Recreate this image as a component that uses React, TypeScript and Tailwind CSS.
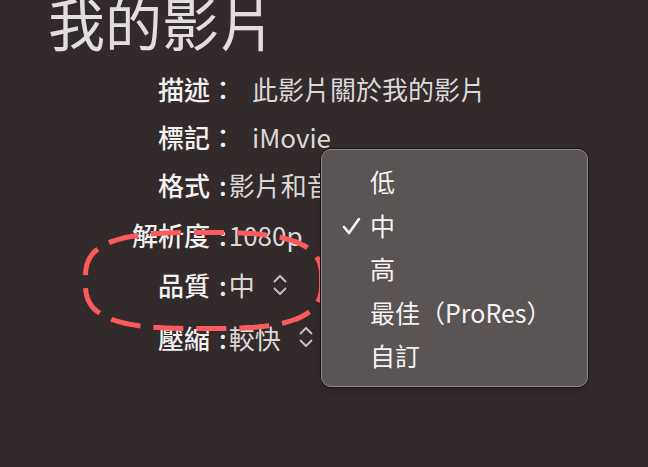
import React from 'react';

const font = { fontFamily: '"Noto Sans CJK TC", "Noto Sans", sans-serif' };

type Row = { label: string; value: string; wide?: boolean; stepper?: boolean; h: string };

const ROWS: Row[] = [
  { label: '描述', value: '此影片關於我的影片', wide: true, h: 'h-[48px]' },
  { label: '標記', value: 'iMovie', wide: true, h: 'h-[48px]' },
  { label: '格式', value: '影片和音訊', h: 'h-[49px]' },
  { label: '解析度', value: '1080p', h: 'h-[50px]' },
  { label: '品質', value: '中', stepper: true, h: 'h-[51px]' },
  { label: '壓縮', value: '較快', stepper: true, h: 'h-[54px]' },
];

const MENU_ITEMS = ['低', '中', '高', '最佳（ProRes）', '自訂'];

// superellipse outline for the hand-drawn style ring
const ringPath = (() => {
  const cx = 203.5, cy = 280.5, a = 118, b = 48, n = 3;
  const pts: string[] = [];
  for (let i = 0; i <= 240; i++) {
    const t = (i / 240) * Math.PI * 2;
    const c = Math.cos(t), s = Math.sin(t);
    const x = cx + a * Math.sign(c) * Math.pow(Math.abs(c), 2 / n);
    const y = cy + b * Math.sign(s) * Math.pow(Math.abs(s), 2 / n);
    pts.push(`${i === 0 ? 'M' : 'L'}${x.toFixed(1)},${y.toFixed(1)}`);
  }
  return pts.join(' ') + ' Z';
})();

const Stepper: React.FC = () => (
  <svg width="14" height="22" viewBox="0 0 14 22" className="ml-[18px] shrink-0" fill="none">
    <polyline points="1.5,7.5 7,2 12.5,7.5" stroke="#c9c4c4" strokeWidth="1.8" strokeLinecap="round" strokeLinejoin="round" />
    <polyline points="1.5,14.5 7,20 12.5,14.5" stroke="#c9c4c4" strokeWidth="1.8" strokeLinecap="round" strokeLinejoin="round" />
  </svg>
);

const App: React.FC = () => {
  return (
    <div className="relative w-full h-[467px] overflow-hidden bg-[#322a2b]" style={font}>
      <div className="pl-[48px] -mt-[7px] text-[57px] leading-[57px] text-[#e2dede]">我的影片</div>

      <div className="mt-[14px] pl-[130px] text-[26px]">
        {ROWS.map((row) => (
          <div key={row.label} className={`flex items-center whitespace-nowrap ${row.h}`}>
            <span className="w-[80px] text-right font-medium text-[#f3f1f1]">{row.label}</span>
            {row.wide ? (
              <>
                <span className="w-[26px] font-medium text-[#f3f1f1]">：</span>
                <span className="ml-[16px] text-[#dcd8d8]">{row.value}</span>
              </>
            ) : (
              <>
                <span className="ml-[9px] font-medium text-[#f3f1f1]">:</span>
                <span className="ml-[2px] text-[#dcd8d8]">{row.value}</span>
              </>
            )}
            {row.stepper && <Stepper />}
          </div>
        ))}
      </div>

      {/* annotation ring */}
      <svg className="absolute left-0 top-0 pointer-events-none" width="648" height="467">
        <path d={ringPath} fill="none" stroke="#ff5b5d" strokeWidth="5" strokeDasharray="30 13" strokeDashoffset="8" />
      </svg>

      {/* popup menu */}
      <div className="absolute left-[320px] top-[148px] w-[269px] h-[240px] rounded-[11px] border border-[#1a1415] shadow-lg">
        <div className="w-full h-full rounded-[10px] border border-[#8b8687] bg-[#5a5455] pt-[10px]">
          {MENU_ITEMS.map((item, i) => (
            <div key={item} className="relative flex items-center h-[43.5px] pl-[48px] text-[25px] text-[#f5f3f3]">
              {i === 1 && (
                <svg className="absolute left-[20px] top-[13px]" width="19" height="19" viewBox="0 0 19 19" fill="none">
                  <polyline points="2,10 7,16 17,2" stroke="#f5f3f3" strokeWidth="2.6" strokeLinecap="round" strokeLinejoin="round" />
                </svg>
              )}
              {item}
            </div>
          ))}
        </div>
      </div>
    </div>
  );
};

export default App;
